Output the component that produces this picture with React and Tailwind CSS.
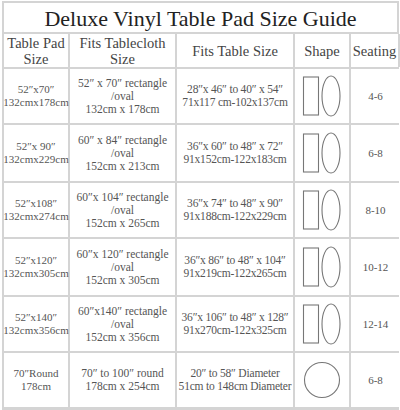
const rows = [
  { pad: ["52″x70″", "132cmx178cm"], cloth: ["52″ x 70″ rectangle", "/oval", "132cm x 178cm"], size: ["28″x 46″ to 40″ x 54″", "71x117 cm-102x137cm"], seat: "4-6", h: "h-[56px]" },
  { pad: ["52″x 90″", "132cmx229cm"], cloth: ["60″ x 84″ rectangle", "/oval", "152cm x 213cm"], size: ["36″x 60″ to 48″ x 72″", "91x152cm-122x183cm"], seat: "6-8", h: "h-[58px]" },
  { pad: ["52″x108″", "132cmx274cm"], cloth: ["60″x 104″ rectangle", "/oval", "152cm x 265cm"], size: ["36″x 74″ to 48″ x 90″", "91x188cm-122x229cm"], seat: "8-10", h: "h-[56px]" },
  { pad: ["52″x120″", "132cmx305cm"], cloth: ["60″x 120″ rectangle", "/oval", "152cm x 305cm"], size: ["36″x 86″ to 48″ x 104″", "91x219cm-122x265cm"], seat: "10-12", h: "h-[58px]" },
  { pad: ["52″x140″", "132cmx356cm"], cloth: ["60″x140″ rectangle", "/oval", "152cm x 356cm"], size: ["36″x 106″ to 48″ x 128″", "91x270cm-122x325cm"], seat: "12-14", h: "h-[56px]" },
];

const Shapes = () => (
  <svg width="46" height="44" viewBox="0 0 46 44">
    <rect x="4.5" y="3" width="15" height="38" fill="none" stroke="#777" strokeWidth="1.1" />
    <ellipse cx="32" cy="22" rx="9" ry="20" fill="none" stroke="#777" strokeWidth="1.1" />
  </svg>
);

const Circle = () => (
  <svg width="40" height="40" viewBox="0 0 40 40">
    <circle cx="20" cy="20" r="17.5" fill="none" stroke="#777" strokeWidth="1.1" />
  </svg>
);

const cell = "border-r-2 border-[#d4d4d4] flex flex-col items-center justify-center text-center whitespace-nowrap";

const Row = ({ pad, cloth, size, seat, h, shape }) => (
  <div className={`grid grid-cols-[66px_107px_118px_56px_49px] border-b-2 border-[#d4d4d4] ${h} leading-[13px] text-[#555]`}>
    <div className={`${cell} text-[11px]`}>{pad.map((t) => <span key={t}>{t}</span>)}</div>
    <div className={`${cell} text-[11.5px]`}>{cloth.map((t) => <span key={t}>{t}</span>)}</div>
    <div className={`${cell} text-[11.5px] tracking-[-0.2px]`}>{size.map((t) => <span key={t}>{t}</span>)}</div>
    <div className={cell}>{shape || <Shapes />}</div>
    <div className="flex items-center justify-center text-[11px]">{seat}</div>
  </div>
);

export default function App() {
  return (
    <div className="w-[400px] h-[410px] bg-white pl-[2px] pt-[1px]" style={{ fontFamily: '"Liberation Serif", serif' }}>
      <div className="w-[397px] border-2 border-[#d4d4d4] border-r-0">
        <div className="h-[31px] border-b-2 border-r-2 border-[#d4d4d4] flex items-center justify-center text-[22px] text-[#222] pt-[2px]">
          Deluxe Vinyl Table Pad Size Guide
        </div>
        <div className="grid grid-cols-[66px_107px_118px_56px_49px] h-[35px] border-b-2 border-[#d4d4d4] text-[14.5px] leading-[16px] text-[#444]">
          <div className={cell}><span>Table Pad</span><span>Size</span></div>
          <div className={cell}><span>Fits Tablecloth</span><span>Size</span></div>
          <div className={cell}>Fits Table Size</div>
          <div className={cell}>Shape</div>
          <div className="flex items-center justify-center border-r-2 border-[#d4d4d4]">Seating</div>
        </div>
        {rows.map((r) => <Row key={r.seat} {...r} />)}
        <Row
          pad={["70″Round", "178cm"]}
          cloth={["70″ to 100″ round", "178cm x 254cm"]}
          size={["20″ to 58″ Diameter", "51cm to 148cm Diameter"]}
          seat="6-8"
          h="h-[56px]"
          shape={<Circle />}
        />
      </div>
    </div>
  );
}
